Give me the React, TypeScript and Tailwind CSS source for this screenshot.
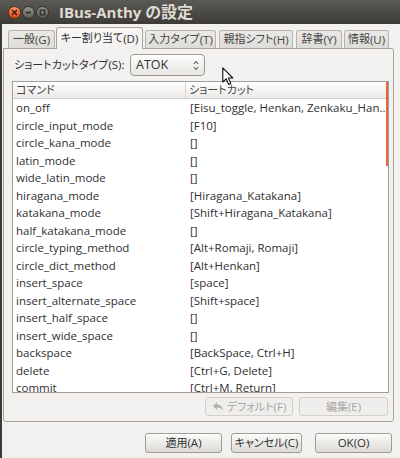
import React from "react";

const rows: [string, string][] = [
  ["on_off", "[Eisu_toggle, Henkan, Zenkaku_Han…"],
  ["circle_input_mode", "[F10]"],
  ["circle_kana_mode", "[]"],
  ["latin_mode", "[]"],
  ["wide_latin_mode", "[]"],
  ["hiragana_mode", "[Hiragana_Katakana]"],
  ["katakana_mode", "[Shift+Hiragana_Katakana]"],
  ["half_katakana_mode", "[]"],
  ["circle_typing_method", "[Alt+Romaji, Romaji]"],
  ["circle_dict_method", "[Alt+Henkan]"],
  ["insert_space", "[space]"],
  ["insert_alternate_space", "[Shift+space]"],
  ["insert_half_space", "[]"],
  ["insert_wide_space", "[]"],
  ["backspace", "[BackSpace, Ctrl+H]"],
  ["delete", "[Ctrl+G, Delete]"],
  ["commit", "[Ctrl+M, Return]"],
];

// CJK runs use their own size so they line up with the narrow latin text
function T({ s }: { s: string }) {
  const parts = s.split(/([\u3000-\u30ff\u4e00-\u9fff\uff00-\uffef]+)/);
  return (
    <>
      {parts.map((p, i) =>
        i % 2 ? (
          <span key={i} className="text-[11px]">
            {p}
          </span>
        ) : (
          p
        )
      )}
    </>
  );
}

const tabs = [
  { label: "一般(G)", w: "w-[47px]", ml: "ml-0" },
  { label: "キー割り当て(D)", w: "w-[87px]", ml: "ml-[1px]", active: true },
  { label: "入力タイプ(T)", w: "w-[71px]", ml: "ml-[2px]" },
  { label: "親指シフト(H)", w: "w-[74px]", ml: "ml-[3px]" },
  { label: "辞書(Y)", w: "w-[46px]", ml: "ml-[3px]" },
  { label: "情報(U)", w: "w-[45px]", ml: "ml-[2px]" },
];

function Btn({ label, w, disabled, icon }: { label: string; w: string; disabled?: boolean; icon?: React.ReactNode }) {
  return (
    <div
      className={
        disabled
          ? `${w} h-full flex items-center justify-center gap-[3px] whitespace-nowrap rounded-[3px] border border-[#d3d0cb] bg-[#efeeed] text-[#aaa7a2]`
          : `${w} h-full flex items-center justify-center gap-[3px] whitespace-nowrap rounded-[3px] border border-[#a09c94] bg-linear-to-b from-[#fbfbfa] to-[#dcdad6] shadow-[inset_0_1px_0_#ffffff]`
      }
    >
      {icon}
      <span>
        <T s={label} />
      </span>
    </div>
  );
}

export default function App() {
  return (
    <div className="relative w-[400px] h-[458px] overflow-hidden bg-[#f2f1f0] text-[#303030] text-[11.5px] font-['Open_Sans','Noto_Sans_CJK_JP',sans-serif] [font-feature-settings:'palt']">
      {/* title bar */}
      <div className="h-[24px] flex items-center bg-linear-to-b from-[#5b5a54] to-[#3c3b37]">
        <div className="flex items-center gap-[1px] pl-[8px]">
          <div className="w-[13px] h-[13px] rounded-full border border-[#6e2a0e] bg-linear-to-b from-[#f7956a] to-[#d8461a] flex items-center justify-center">
            <svg width="7" height="7" viewBox="0 0 7 7">
              <path d="M1 1 L6 6 M6 1 L1 6" stroke="#4a1a06" strokeWidth="1.5" />
            </svg>
          </div>
          <div className="w-[13px] h-[13px] rounded-full border border-[#35342f] bg-linear-to-b from-[#94928c] to-[#5e5c57] flex items-center justify-center">
            <svg width="7" height="7" viewBox="0 0 7 7">
              <path d="M1 3.5 L6 3.5" stroke="#2e2d29" strokeWidth="1.6" />
            </svg>
          </div>
          <div className="w-[13px] h-[13px] rounded-full border border-[#35342f] bg-linear-to-b from-[#94928c] to-[#5e5c57] flex items-center justify-center">
            <svg width="7" height="7" viewBox="0 0 7 7">
              <rect x="1.2" y="1.2" width="4.6" height="4.6" fill="none" stroke="#2e2d29" strokeWidth="1.3" />
            </svg>
          </div>
        </div>
        <div className="ml-[10px] font-bold text-[15px] text-[#dfdbd2] whitespace-nowrap">
          IBus-Anthy <span className="text-[16px]">の設定</span>
        </div>
      </div>

      {/* body */}
      <div className="flex flex-col border-l-2 border-[#3c3b37] h-[434px]">
        <div className="ml-[1px] mr-[6px] mt-[3px]">
          {/* tabs */}
          <div className="flex items-end h-[21px] pl-[5px] whitespace-nowrap">
            {tabs.map((t) =>
              t.active ? (
                <div
                  key={t.label}
                  className={`${t.w} ${t.ml} relative z-10 -mb-px h-[22px] flex items-center justify-center rounded-t-[3px] border border-b-0 border-[#a7a39c] bg-linear-to-b from-[#f8f7f6] to-[#f2f1f0]`}
                >
                  <T s={t.label} />
                </div>
              ) : (
                <div
                  key={t.label}
                  className={`${t.w} ${t.ml} h-[18px] flex items-center justify-center rounded-t-[3px] border border-b-0 border-[#b8b4ad] bg-linear-to-b from-[#ebe9e6] to-[#dedcd8] text-[#454545]`}
                >
                  <T s={t.label} />
                </div>
              )
            )}
          </div>

          {/* panel */}
          <div className="border border-[#a7a39c] rounded-b-[3px] rounded-tr-[3px] pl-[8px] pr-[4px] pt-[5px] pb-[5px]">
            <div className="flex items-center h-[22px]">
              <div className="w-[118px] pl-[2px] whitespace-nowrap">
                <T s="ショートカットタイプ(S):" />
              </div>
              <div className="w-[75px] h-full flex items-center justify-between pl-[5px] pr-[5px] rounded-[4px] border border-[#9c988f] bg-linear-to-b from-[#fdfdfc] to-[#e8e6e3] shadow-[inset_0_1px_0_#ffffff]">
                <span className="text-[12.5px]">ATOK</span>
                <svg width="6" height="11" viewBox="0 0 6 11">
                  <path d="M0.8 4 L3 1.5 L5.2 4 M0.8 7 L3 9.5 L5.2 7" fill="none" stroke="#555" strokeWidth="1.1" />
                </svg>
              </div>
            </div>

            {/* tree */}
            <div className="relative mt-[5px] h-[312px] overflow-hidden border border-[#a29e97] bg-white">
              <div className="absolute right-[-1px] top-[-1px] w-[3px] h-[85px] bg-[#e5683a] z-10" />
              <div className="flex h-[17px] border-b border-[#cfccc6] bg-linear-to-b from-[#ffffff] to-[#eceae7] text-[#454545]">
                <div className="w-[173px] flex items-center pl-[3px] border-r border-[#d8d5d0]">
                  <T s="コマンド" />
                </div>
                <div className="flex-1 flex items-center pl-[3px]">
                  <T s="ショートカット" />
                </div>
              </div>
              {rows.map(([cmd, key]) => (
                <div key={cmd} className="flex h-[17.5px] items-center">
                  <div className="w-[174px] pl-[3px] whitespace-nowrap">{cmd}</div>
                  <div className="flex-1 pl-[3px] whitespace-nowrap overflow-hidden">{key}</div>
                </div>
              ))}
            </div>

            <div className="mt-[4px] h-[19px] flex justify-end gap-[6px] pr-[1px]">
              <Btn
                label="デフォルト(F)"
                w="w-[88px]"
                disabled
                icon={
                  <svg width="12" height="11" viewBox="0 0 12 11">
                    <path d="M5 1 L1 5 L5 9 V6.6 C8 6.6 10 7.6 11 10.5 C11 6.4 8.8 3.6 5 3.4 Z" fill="#b3b0ab" />
                  </svg>
                }
              />
              <Btn label="編集(E)" w="w-[89px]" disabled />
            </div>
          </div>
        </div>

        {/* dialog buttons */}
        <div className="mt-[11px] h-[20px] flex justify-end pr-[8px]">
          <Btn label="適用(A)" w="w-[77px]" />
          <div className="w-[9px]" />
          <Btn label="キャンセル(C)" w="w-[71px]" />
          <div className="w-[13px]" />
          <Btn label="OK(O)" w="w-[77px]" />
        </div>
      </div>

      {/* mouse pointer */}
      <svg className="absolute left-[222px] top-[67px]" width="12" height="19" viewBox="0 0 12 19">
        <path d="M0.8 0.8 L0.8 15 L4.2 11.8 L6.6 17.4 L8.8 16.4 L6.4 11 L10.8 11 Z" fill="#ffffff" stroke="#111111" strokeWidth="1.1" strokeLinejoin="round" />
      </svg>
    </div>
  );
}
